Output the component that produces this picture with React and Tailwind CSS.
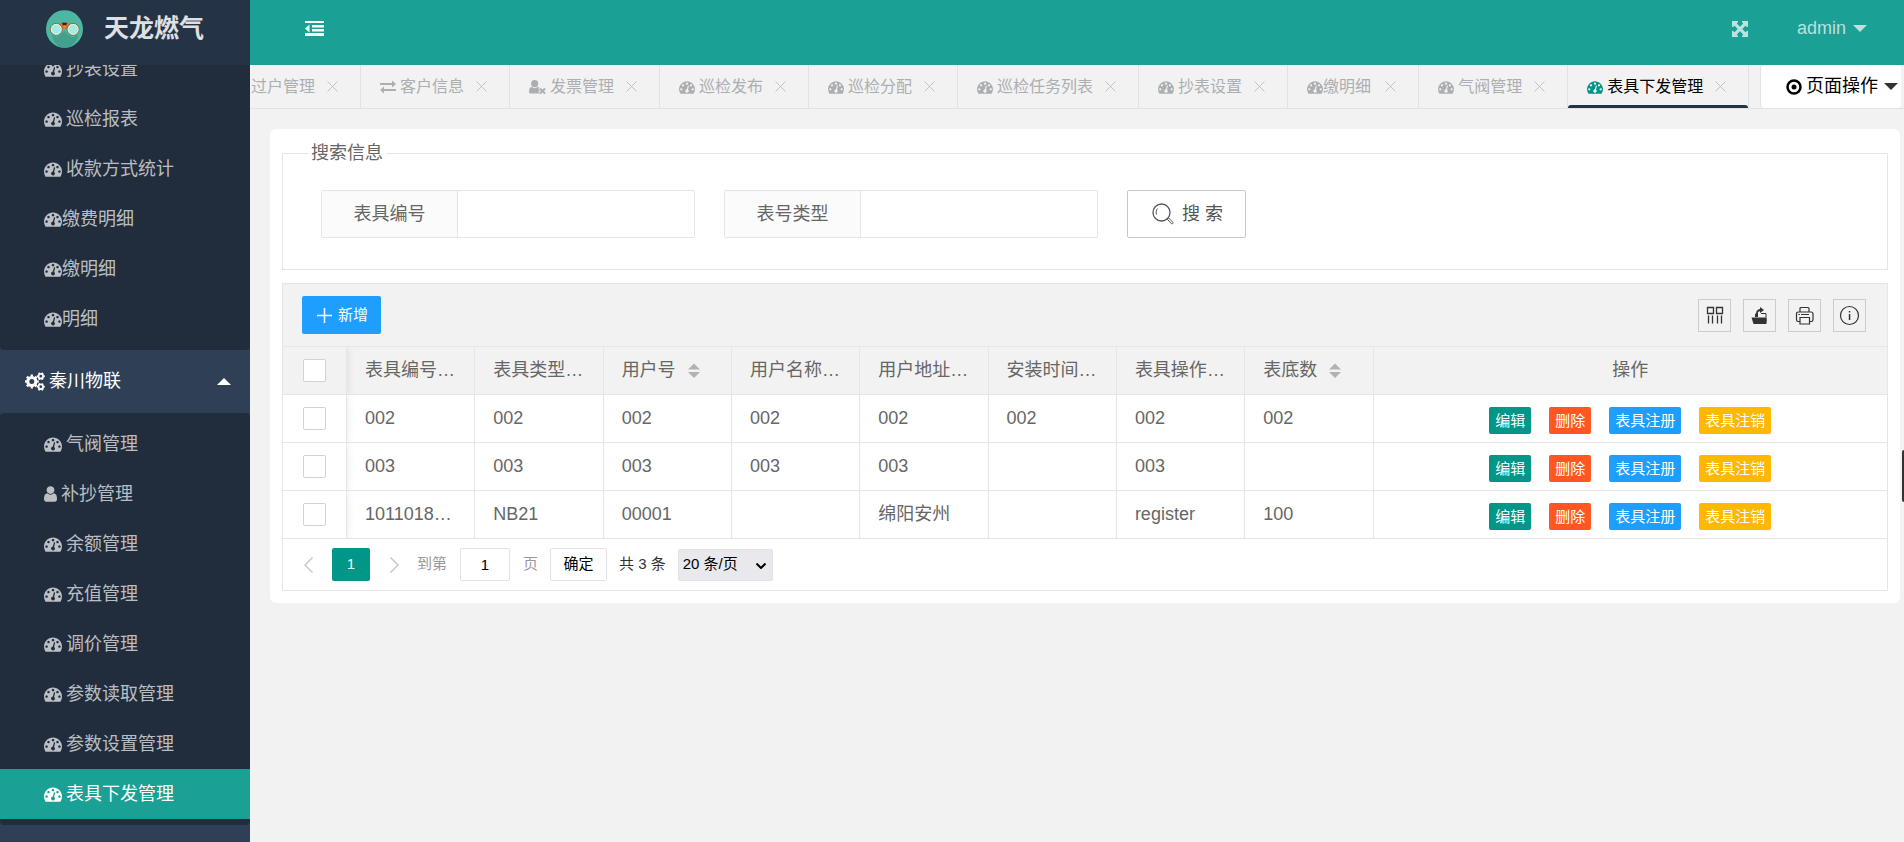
import React, { useState } from 'react';
import clsx from 'clsx';

const DashboardIcon = ({ className }) => (
  <svg viewBox="0 0 1792 1792" fill="currentColor" className={className} aria-hidden="true">
    <path d="M384 1152q0-53-37.5-90.5t-90.5-37.5-90.5 37.5-37.5 90.5 37.5 90.5 90.5 37.5 90.5-37.5 37.5-90.5zm192-448q0-53-37.5-90.5t-90.5-37.5-90.5 37.5-37.5 90.5 37.5 90.5 90.5 37.5 90.5-37.5 37.5-90.5zm428 481l101-382q6-26-7.5-48.5t-38.5-29.5-48 6.5-30 39.5l-101 382q-60 5-107 43.5t-63 98.5q-20 77 20 146t117 89 146-20 89-117q16-60-6-117t-72-91zm660-33q0-53-37.5-90.5t-90.5-37.5-90.5 37.5-37.5 90.5 37.5 90.5 90.5 37.5 90.5-37.5 37.5-90.5zm-640-640q0-53-37.5-90.5t-90.5-37.5-90.5 37.5-37.5 90.5 37.5 90.5 90.5 37.5 90.5-37.5 37.5-90.5zm448 192q0-53-37.5-90.5t-90.5-37.5-90.5 37.5-37.5 90.5 37.5 90.5 90.5 37.5 90.5-37.5 37.5-90.5zm320 448q0 261-141 483-19 29-54 29h-1402q-35 0-54-29-141-221-141-483 0-182 71-348t191-286 286-191 348-71 348 71 286 191 191 286 71 348z" />
  </svg>
);

const ExchangeIcon = ({ className }) => (
  <svg viewBox="0 0 16 16" fill="currentColor" className={className} aria-hidden="true">
    <path d="M0 4h12V1.500L16 5l-4 3.500V6H0zM16 10H4V7.500L0 11l4 3.500V12h12z" />
  </svg>
);

const UserIcon = ({ className }) => (
  <svg viewBox="256 128 1280 1536" fill="currentColor" className={className} aria-hidden="true">
    <path d="M1536 1399q0 109-62.5 187t-150.5 78h-854q-88 0-150.5-78t-62.5-187q0-85 8.5-160.5t31.5-152 58.5-131 94-89 134.5-34.5q131 128 313 128t313-128q76 0 134.5 34.5t94 89 58.5 131 31.5 152 8.5 160.5zm-256-887q0 159-112.5 271.5t-271.5 112.5-271.5-112.5-112.5-271.500 112.500-271.500 271.500-112.500 271.500 112.500 112.500 271.500z" />
  </svg>
);

const UserTimesIcon = ({ className }) => (
  <svg viewBox="0 0 18 16" fill="currentColor" className={className} aria-hidden="true">
    <circle cx="6" cy="4.500" r="3.800" />
    <path d="M3 8c2 1.600 4.200 1.600 6 0 .8 0 1.500.3 2 .8L9.800 10l1.700 1.700-1.700 1.700 1.500 1.600H2c-1.200 0-2-.8-2-2.200C0 10 1 8 3 8z" />
    <path d="M11.500 9.500l5.500 5.500M17 9.500L11.500 15" stroke="currentColor" strokeWidth="2.200" />
  </svg>
);

// Ring plus a dashed outer ring; pathLength gives one dash per tooth
const Gear = ({ cx, cy, r, teeth }) => (
  <g fill="none" stroke="currentColor">
    <circle cx={cx} cy={cy} r={r * 0.58} strokeWidth={r * 0.44} />
    <circle cx={cx} cy={cy} r={r * 0.86} strokeWidth={r * 0.28} pathLength={teeth * 2} strokeDasharray="1 1" strokeDashoffset="0.5" />
  </g>
);

const CogsIcon = () => (
  <svg viewBox="0 0 20 19" className="h-[19px] w-5" aria-hidden="true">
    <Gear cx={6.800} cy={9.500} r={7} teeth={8} />
    <Gear cx={15.800} cy={4.200} r={4} teeth={6} />
    <Gear cx={15.800} cy={14.800} r={4} teeth={6} />
  </svg>
);

const OutdentIcon = () => (
  <svg viewBox="0 0 19 15" fill="currentColor" className="h-[15px] w-[19px]" aria-hidden="true">
    <path d="M0 0h19v2H0zM7 4h12v2.500H7zM7 8h12v2.500H7zM0 12h19v3H0zM4.500 3.500v8L0 7.500z" />
  </svg>
);

const ExpandIcon = () => (
  <svg viewBox="0 0 16 16" className="h-4 w-4" aria-hidden="true">
    <path d="M0 0h6v1L4.800 2.500 8 5.700l3.200-3.200L10 1V0h6v6h-1l-1.500-1.200L10.300 8l3.200 3.200L15 10h1v6h-6v-1l1.200-1.500L8 10.300l-3.200 3.200L6 15v1H0v-6h1l1.500 1.200L5.700 8 2.500 4.800 1 6H0z" fill="currentColor" />
  </svg>
);

const Caret = ({ up, className }) => (
  <svg viewBox="0 0 14 7" fill="currentColor" className={clsx('h-[7px] w-[14px]', className)} aria-hidden="true">
    <path d={up ? 'M0 7 7 0l7 7z' : 'M0 0h14L7 7z'} />
  </svg>
);

const CloseIcon = () => (
  <svg viewBox="0 0 11 11" fill="none" stroke="currentColor" className="h-[11px] w-[11px]" aria-hidden="true">
    <path d="M.5.5l10 10M10.500.5l-10 10" />
  </svg>
);

const Logo = () => (
  <svg viewBox="0 0 112 114" className="h-[38px] w-[37px]" aria-hidden="true">
    <ellipse cx="56" cy="57" rx="56" ry="57" fill="#4db8a2" />
    <path d="M18 74 32 82 44 74 56 62l12 14 13 6 17-8c-4 22-20 40-42 40S22 96 18 74z" fill="#43a08e" />
    <path d="M38 42l10-4h16l10 4-6 18h-6l-6-8-6 8h-6z" fill="#e06f2c" />
    <path d="M48 38h16l-4 10h-8z" fill="#33231e" />
    <circle cx="56" cy="49" r="4" fill="#f08a3c" />
    <circle cx="31" cy="58" r="18" fill="#a5ece0" stroke="#96633a" strokeWidth="3" />
    <circle cx="82" cy="58" r="18" fill="#a5ece0" stroke="#96633a" strokeWidth="3" />
    <circle cx="31" cy="58" r="15" fill="none" stroke="#d3f7f0" strokeWidth="3" />
    <circle cx="82" cy="58" r="15" fill="none" stroke="#d3f7f0" strokeWidth="3" />
  </svg>
);

const icons = {
  dashboard: DashboardIcon,
  exchange: ExchangeIcon,
  user: UserIcon,
  userTimes: UserTimesIcon,
};

// tight: the label follows its icon without a space
const reportMenu = [
  { label: '抄表设置' },
  { label: '巡检报表' },
  { label: '收款方式统计' },
  { label: '缴费明细', tight: true },
  { label: '缴明细', tight: true },
  { label: '明细', tight: true },
];

const iotMenu = [
  { label: '气阀管理' },
  { label: '补抄管理', icon: 'user' },
  { label: '余额管理' },
  { label: '充值管理' },
  { label: '调价管理' },
  { label: '参数读取管理' },
  { label: '参数设置管理' },
  { label: '表具下发管理', active: true },
];

const tabs = [
  { label: '过户管理', icon: 'exchange' },
  { label: '客户信息', icon: 'exchange' },
  { label: '发票管理', icon: 'userTimes' },
  { label: '巡检发布' },
  { label: '巡检分配' },
  { label: '巡检任务列表' },
  { label: '抄表设置' },
  { label: '缴明细', tight: true },
  { label: '气阀管理' },
  { label: '表具下发管理', active: true },
];

const columns = ['表具编号', '表具类型', '用户号', '用户名称', '用户地址', '安装时间', '表具操作', '表底数'];

const rows = [
  ['002', '002', '002', '002', '002', '002', '002', '002'],
  ['003', '003', '003', '003', '003', '', '003', ''],
  ['10110180023', 'NB21', '00001', '', '绵阳安州', '', 'register', '100'],
];

const actions = [
  { label: '编辑', color: 'bg-[#009688]' },
  { label: '删除', color: 'bg-[#ff5722]' },
  { label: '表具注册', color: 'bg-[#1e9fff]' },
  { label: '表具注销', color: 'bg-[#ffb800]' },
];

const MenuList = ({ items }) => (
  <ul className="rounded-sm bg-[#212d3c] py-[6px]">
    {items.map((item) => {
      const Icon = icons[item.icon || 'dashboard'];
      return (
        <li key={item.label}>
          <a
            href="#"
            className={clsx(
              'flex h-[50px] items-center pl-[44px]',
              item.tight ? 'gap-0' : 'gap-1',
              item.active ? 'bg-[#1aa094] text-white' : 'text-white/70 hover:text-white'
            )}
          >
            <Icon className={item.icon === 'user' ? 'h-4 w-[13px]' : 'h-[18px] w-[18px]'} />
            {item.label}
          </a>
        </li>
      );
    })}
  </ul>
);

const Sidebar = () => (
  <aside className="flex w-[250px] shrink-0 flex-col overflow-hidden bg-[#2f4056]">
    <div className="z-10 flex h-[65px] shrink-0 items-center gap-[21px] bg-[#243346] pb-2 pl-[46px]">
      <Logo />
      <h1 className="text-[25px] font-bold text-white/85">天龙燃气</h1>
    </div>
    <nav className="-mt-[27px]">
      <MenuList items={reportMenu} />
      <button className="flex h-[63px] w-full items-center gap-1 pr-[19px] pl-[25px] text-white">
        <CogsIcon />
        <span>秦川物联</span>
        <Caret up className="ml-auto" />
      </button>
      <MenuList items={iotMenu} />
    </nav>
  </aside>
);

const Header = () => (
  <header className="flex h-[65px] shrink-0 items-center bg-[#1aa094] pr-[37px] pb-2 pl-[55px] text-white/70">
    <button className="text-white" aria-label="收起菜单">
      <OutdentIcon />
    </button>
    <button className="ml-auto" aria-label="全屏">
      <ExpandIcon />
    </button>
    <button className="ml-[49px] flex items-center gap-[7px]">
      admin
      <Caret />
    </button>
  </header>
);

const TabBar = () => (
  <div className="flex h-11 shrink-0 border-b border-[#e2e2e2] pr-[3px]">
    <div className="flex min-w-0 flex-1 overflow-hidden">
      <ul className="-ml-[38px] flex text-[16px] whitespace-nowrap">
        {tabs.map((tab) => {
          const Icon = icons[tab.icon || 'dashboard'];
          return (
            <li
              key={tab.label}
              className={clsx(
                'relative flex shrink-0 items-center border-r border-[#e2e2e2] pr-[22px] pl-[19px]',
                tab.active ? 'text-black' : 'text-[#acafb1]'
              )}
            >
              <a href="#" className={clsx('flex items-center', tab.tight ? 'gap-0' : 'gap-1')}>
                <Icon className={clsx('h-4', tab.icon === 'userTimes' ? 'w-[17px]' : 'w-4', tab.active && 'text-[#009688]')} />
                {tab.label}
              </a>
              <button className={clsx('text-[#c2c2c2]', tab.tight ? 'ml-[14px]' : 'ml-3')} aria-label={`关闭${tab.label}`}>
                <CloseIcon />
              </button>
              {tab.active && <span className="absolute inset-x-0 bottom-0 h-[3px] rounded-t-sm bg-[#243346]" />}
            </li>
          );
        })}
      </ul>
    </div>
    <button className="flex shrink-0 items-center gap-1 rounded-sm border-l border-[#e2e2e2] bg-white pr-[3px] pl-[25px] text-black">
      <svg viewBox="0 0 16 16" className="h-4 w-4" aria-hidden="true">
        <circle cx="8" cy="8" r="6.500" fill="none" stroke="currentColor" strokeWidth="2.500" />
        <circle cx="8" cy="8" r="2.500" fill="currentColor" />
      </svg>
      页面操作
      <Caret className="ml-[2px] text-[#333]" />
    </button>
  </div>
);

const SearchField = ({ id, label, value, onChange }) => (
  <div className="flex h-12 w-[374px] rounded-xs border border-[#e6e6e6]">
    <label htmlFor={id} className="flex w-[136px] shrink-0 items-center justify-center border-r border-[#e6e6e6] bg-[#fbfbfb]">
      {label}
    </label>
    <input id={id} value={value} onChange={(e) => onChange(e.target.value)} className="min-w-0 flex-1 px-3 outline-none" />
  </div>
);

const SearchPanel = () => {
  const [code, setCode] = useState('');
  const [type, setType] = useState('');

  return (
    <fieldset className="border border-[#e6e6e6] pt-[25px] pr-4 pb-[31px] pl-[38px]">
      <legend className="-ml-[13px] px-[3px] leading-6">搜索信息</legend>
      <div className="flex flex-wrap items-center gap-[29px]">
        <SearchField id="meter-code" label="表具编号" value={code} onChange={setCode} />
        <SearchField id="meter-type" label="表号类型" value={type} onChange={setType} />
        <button className="flex h-12 items-center gap-2 rounded-xs border border-[#c9c9c9] pr-[22px] pl-6 text-[#555]">
          <svg viewBox="0 0 22 22" fill="none" stroke="currentColor" className="h-[22px] w-[22px]" aria-hidden="true">
            <circle cx="9.500" cy="9.500" r="8.500" strokeWidth="1.300" />
            <path d="M4.500 11.500c-.8-2-.3-4.500 1-6" />
            <path d="M15.200 16.200l1.400-1.300 4.200 4.300c.8.9-.5 2.200-1.400 1.400z" />
          </svg>
          搜 索
        </button>
      </div>
    </fieldset>
  );
};

const SortIcon = () => (
  <svg viewBox="0 0 12 16" fill="#b2b2b2" className="ml-3 inline-block h-4 w-3" aria-hidden="true">
    <path d="M0 6.500 6 .5l6 6zM0 9h12l-6 6z" />
  </svg>
);

const tools = [
  {
    name: '筛选列',
    icon: (
      <g fill="none" stroke="currentColor" strokeWidth="1.300">
        <path d="M2.500 1.500h6v6h-6zM11.500 1.500h6v6h-6z" />
        <path d="M3.500 9.500v8M7.500 9.500v8M12.500 9.500v8M16.500 9.500v8" />
      </g>
    ),
  },
  {
    name: '导出',
    icon: (
      <>
        <path d="M1.500 11.500H15l1.500 1V18h-13zM5 11V8l3-2v5z" fill="currentColor" />
        <path d="M6 7c.5-3 2.500-4 4-4V1l4 3-4 3V5.200C8.500 5.200 7.500 6 7 8z" fill="currentColor" />
        <path d="M11 7.500h5V16" fill="none" stroke="currentColor" />
      </>
    ),
  },
  {
    name: '打印',
    icon: (
      <g fill="none" stroke="currentColor" strokeWidth="1.200">
        <path d="M5 6V2.500q0-1 1-1h7q1 0 1 1V6M5 15.500H3q-1.500 0-1.500-2V8q0-2 2-2h12.500q2 0 2 2v5.500q0 2-1.500 2h-2" />
        <path d="M5 11.500h9.500v6.500H5zM3.500 8.500H5M6 8.500h8" />
      </g>
    ),
  },
  {
    name: '提示',
    icon: (
      <>
        <circle cx="9.500" cy="9.500" r="9" fill="none" stroke="currentColor" strokeWidth="1.200" />
        <path d="M8.800 5h1.500v1.500H8.800zM8.800 8h1.500v6H8.800z" fill="currentColor" />
      </>
    ),
  },
];

const Toolbar = () => (
  <div className="flex items-center justify-between bg-[#f2f2f2] py-3 pr-[21px] pl-[19px]">
    <button className="flex h-[38px] items-center gap-[6px] rounded-xs bg-[#1e9fff] pr-[13px] pl-[15px] text-[15px] text-white">
      <svg viewBox="0 0 15 15" stroke="currentColor" strokeWidth="1.500" className="h-[15px] w-[15px]" aria-hidden="true">
        <path d="M7.500 0v15M0 7.500h15" />
      </svg>
      新增
    </button>
    <div className="flex gap-3">
      {tools.map((tool) => (
        <button
          key={tool.name}
          aria-label={tool.name}
          className="flex h-[33px] w-[33px] items-center justify-center border border-[#ccc] text-[#333]"
        >
          <svg viewBox="0 0 19 19" className="h-[19px] w-[19px] overflow-visible">
            {tool.icon}
          </svg>
        </button>
      ))}
    </div>
  </div>
);

const CheckCell = ({ as: Tag, label, className }) => (
  <Tag
    className={clsx(
      'relative z-10 border-r border-b border-[#e6e6e6] shadow-[1px_0_8px_rgba(0,0,0,0.08)] [clip-path:inset(0_-12px_0_0)]',
      className
    )}
  >
    <input
      type="checkbox"
      aria-label={label}
      className="mx-auto block h-[23px] w-[23px] appearance-none rounded-xs border border-[#d2d2d2] bg-white checked:bg-[#009688]"
    />
  </Tag>
);

const MeterTable = () => (
  <table className="w-full table-fixed border-separate border-spacing-0 border-t border-[#e6e6e6] text-left">
    <colgroup>
      <col className="w-16" />
      {columns.map((column) => (
        <col key={column} className="w-[8%]" />
      ))}
      <col />
    </colgroup>
    <thead className="bg-[#f2f2f2]">
      <tr className="h-12">
        <CheckCell as="th" label="全选" className="bg-[#f2f2f2]" />
        {columns.map((column) => (
          <th key={column} className="truncate border-r border-b border-[#e6e6e6] px-[18px] font-normal">
            {column}
            <SortIcon />
          </th>
        ))}
        <th className="border-b border-[#e6e6e6] text-center font-normal">操作</th>
      </tr>
    </thead>
    <tbody>
      {rows.map((row, i) => (
        <tr key={row[0]} className="h-12">
          <CheckCell as="td" label={`选择第${i + 1}行`} className="bg-white" />
          {row.map((cell, j) => (
            <td key={j} className="truncate border-r border-b border-[#e6e6e6] px-[18px]">
              {cell}
            </td>
          ))}
          <td className="border-b border-[#e6e6e6]">
            <div className="flex justify-center gap-[18px] pt-[3px] text-[15px] text-white">
              {actions.map((action) => (
                <button key={action.label} className={clsx('h-[27px] rounded-xs px-[6px] leading-[27px]', action.color)}>
                  {action.label}
                </button>
              ))}
            </div>
          </td>
        </tr>
      ))}
    </tbody>
  </table>
);

const Pager = () => {
  const [page, setPage] = useState('1');

  return (
    <div className="flex items-center py-[9px] pl-[21px] text-[15px] text-[#333]">
      <button className="text-[#c9c9c9]" aria-label="上一页">
        <svg viewBox="0 0 9 16" fill="none" stroke="currentColor" strokeWidth="1.500" className="h-4 w-[9px]">
          <path d="M8.500.5 1 8l7.500 7.500" />
        </svg>
      </button>
      <button className="ml-[19px] h-[33px] w-[38px] rounded-xs bg-[#009688] text-white">1</button>
      <button className="ml-5 text-[#c9c9c9]" aria-label="下一页">
        <svg viewBox="0 0 9 16" fill="none" stroke="currentColor" strokeWidth="1.500" className="h-4 w-[9px]">
          <path d="M.5.5 8 8 .5 15.500" />
        </svg>
      </button>
      <label htmlFor="page" className="ml-[18px] text-[#999]">到第</label>
      <input
        id="page"
        value={page}
        onChange={(e) => setPage(e.target.value)}
        className="mx-[13px] h-[33px] w-[50px] rounded-xs border border-[#e2e2e2] text-center text-black"
      />
      <span className="text-[#999]">页</span>
      <button className="mx-3 h-[33px] w-[57px] rounded-xs border border-[#e2e2e2] text-black">确定</button>
      <span>共 3 条</span>
      <div className="relative ml-3">
        <select aria-label="每页条数" className="h-8 w-[95px] appearance-none rounded-xs border border-[#e2e2e2] bg-[#e9e9ed] pl-1 text-black">
          <option>20 条/页</option>
          <option>50 条/页</option>
          <option>100 条/页</option>
        </select>
        <svg viewBox="0 0 10 6" fill="none" stroke="#000" strokeWidth="2" className="pointer-events-none absolute top-[14px] right-[7px] h-[6px] w-[10px]">
          <path d="M.5.5 5 5 9.500.5" />
        </svg>
      </div>
    </div>
  );
};

const App = () => (
  <div className="relative flex h-screen overflow-hidden bg-[#f2f2f2] font-['Liberation_Sans','Noto_Sans_CJK_SC',sans-serif] text-[18px] text-[#666]">
    <Sidebar />
    <div className="flex min-w-0 flex-1 flex-col">
      <Header />
      <TabBar />
      <main className="pt-5 pr-1 pl-5">
        <div className="rounded-md bg-white p-3">
          <SearchPanel />
          <div className="mt-[13px] overflow-hidden border border-[#e6e6e6]">
            <Toolbar />
            <MeterTable />
            <Pager />
          </div>
        </div>
      </main>
    </div>
    <div className="absolute top-[450px] right-0 h-[52px] w-[2px] rounded-l-sm bg-[#333]" />
  </div>
);

export default App;
